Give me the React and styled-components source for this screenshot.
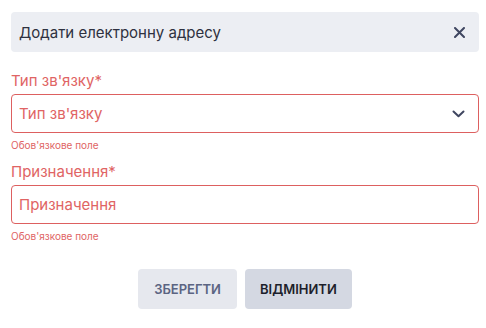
import styled, { createGlobalStyle } from "styled-components";

const GlobalStyle = createGlobalStyle`
    body {
        margin: 0;
        background: #fff;
        font-family: Inter, "Noto Sans", sans-serif;
    }
`;

const Wrapper = styled.div`
    padding: 12px 7px 0 11px;
    width: 468px;
`;

const Header = styled.div`
    display: flex;
    align-items: center;
    justify-content: space-between;
    height: 40px;
    padding: 0 14px 0 8px;
    background-color: #eceef3;
    border-radius: 4px;
    font-size: 15px;
    color: #2e3140;
`;

const CloseButton = styled.button`
    display: flex;
    margin: 0;
    padding: 0;
    border: none;
    background: inherit;
    color: #3f4660;
`;

const Field = styled.div`
    display: flex;
    flex-direction: column;
    margin-top: ${(p) => p.$top}px;
`;

const Label = styled.label`
    font-size: 15px;
    line-height: 18px;
    color: #e06464;
    margin-bottom: 4px;
`;

const Box = styled.div`
    display: flex;
    align-items: center;
    justify-content: space-between;
    height: 39px;
    box-sizing: border-box;
    padding: 0 13px 0 7px;
    border: 1px solid #dd6060;
    border-radius: 4px;
    font-size: 15px;
    color: #e06464;
`;

const ErrorText = styled.div`
    margin-top: 6px;
    font-size: 10px;
    line-height: 12px;
    color: #e06464;
`;

const Buttons = styled.div`
    display: flex;
    justify-content: center;
    gap: 8px;
    margin-top: 27px;
`;

const Button = styled.button`
    height: 40px;
    padding: 0 ${(p) => p.$pad}px;
    border: none;
    border-radius: 4px;
    background-color: ${(p) => (p.$primary ? "#e6e8ee" : "#d4d8e2")};
    color: ${(p) => (p.$primary ? "#5b6482" : "#1d1f2b")};
    font-family: Inter, "Noto Sans", sans-serif;
    font-size: 13px;
    font-weight: 600;
    text-transform: uppercase;
`;

const App = () => {
    return (
        <>
            <GlobalStyle />
            <Wrapper>
                <Header>
                    Додати електронну адресу
                    <CloseButton>
                        <svg width="11" height="11" viewBox="0 0 11 11">
                            <path d="M1 1 L10 10 M10 1 L1 10" stroke="currentColor" strokeWidth="2" strokeLinecap="round" />
                        </svg>
                    </CloseButton>
                </Header>
                <Field $top={20}>
                    <Label>Тип зв'язку*</Label>
                    <Box>
                        Тип зв'язку
                        <svg width="13" height="8" viewBox="0 0 13 8">
                            <path d="M1.5 1.5 L6.5 6.2 L11.5 1.5" fill="none" stroke="#3f4660" strokeWidth="2" strokeLinecap="round" strokeLinejoin="round" />
                        </svg>
                    </Box>
                    <ErrorText>Обов'язкове поле</ErrorText>
                </Field>
                <Field $top={12}>
                    <Label>Призначення*</Label>
                    <Box>Призначення</Box>
                    <ErrorText>Обов'язкове поле</ErrorText>
                </Field>
                <Buttons>
                    <Button $primary $pad={16}>Зберегти</Button>
                    <Button $pad={15}>Відмінити</Button>
                </Buttons>
            </Wrapper>
        </>
    );
};

export default App;
